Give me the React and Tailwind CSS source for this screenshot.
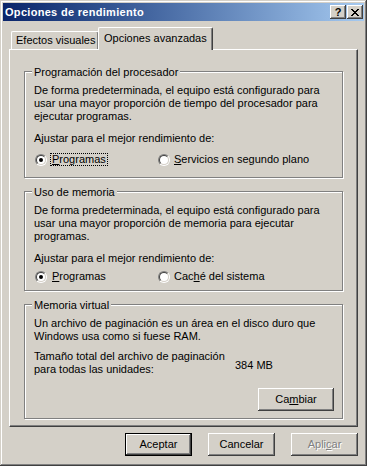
const raised =
  "shadow-[inset_-1px_-1px_#404040,inset_1px_1px_#ffffff,inset_-2px_-2px_#808080,inset_2px_2px_#d4d0c8]";

function Radio({ checked }) {
  return (
    <span className="inline-flex w-[12px] h-[12px] shrink-0 rounded-full border border-t-[#808080] border-l-[#808080] border-r-white border-b-white">
      <span className="flex flex-1 items-center justify-center rounded-full border border-t-[#404040] border-l-[#404040] border-r-[#d4d0c8] border-b-[#d4d0c8] bg-white">
        {checked && <span className="w-[4px] h-[4px] rounded-full bg-black" />}
      </span>
    </span>
  );
}

function Group({ title, className, children }) {
  return (
    <div
      className={
        "relative border border-[#808080] shadow-[inset_1px_1px_#ffffff,1px_1px_#ffffff] pl-[9px] " +
        className
      }
    >
      <span className="absolute left-[7px] top-[-6px] bg-[#d4d0c8] px-[2px]">{title}</span>
      {children}
    </div>
  );
}

function Button({ children, className = "", isDefault, disabled }) {
  return (
    <div
      className={
        "flex items-center justify-center h-[23px] bg-[#d4d0c8] " +
        raised +
        " " +
        (isDefault ? "border border-black " : "") +
        (disabled ? "text-[#808080] [text-shadow:1px_1px_0_#ffffff] " : "") +
        className
      }
    >
      {children}
    </div>
  );
}

function TitleButton({ children }) {
  return (
    <div className={"flex items-center justify-center w-[16px] h-[14px] bg-[#d4d0c8] " + raised}>
      {children}
    </div>
  );
}

export default function App() {
  return (
    <div className="w-[367px] h-[466px] bg-[#d4d0c8] p-[3px] shadow-[inset_-1px_-1px_#404040,inset_1px_1px_#d4d0c8,inset_-2px_-2px_#808080,inset_2px_2px_#ffffff] font-['Liberation_Sans',Arial,sans-serif] text-[11px] leading-[13px] text-black select-none">
      {/* title bar */}
      <div className="flex items-center h-[18px] bg-linear-to-r from-[#0a246a] to-[#a6caf0] pl-[2px] pr-[1px]">
        <span className="flex-1 font-bold text-white tracking-[0.3px]">Opciones de rendimiento</span>
        <div className="flex gap-[1px]">
          <TitleButton>
            <span className="font-bold text-[11px] leading-[11px] mt-[1px]">?</span>
          </TitleButton>
          <TitleButton>
            <svg width="8" height="7" viewBox="0 0 8 7" shapeRendering="crispEdges" className="mt-[1px]">
              <path
                d="M0 0h2v1H0zM6 0h2v1H6zM1 1h2v1H1zM5 1h2v1H5zM2 2h4v1H2zM3 3h2v1H3zM2 4h4v1H2zM1 5h2v1H1zM5 5h2v1H5zM0 6h2v1H0zM6 6h2v1H6z"
                fill="#000"
              />
            </svg>
          </TitleButton>
        </div>
      </div>

      <div className="pl-[6px]">
        {/* tabs */}
        <div className="flex items-end h-[22px] mt-[6px]">
          <div className="w-[88px] h-[18px] ml-[2px] border-l border-t border-white border-r border-r-[#404040] shadow-[inset_-1px_0_#808080] rounded-tl-[2px] rounded-tr-[2px] pl-[4px] pt-[2px]">
            Efectos visuales
          </div>
          <div className="relative z-10 w-[115px] h-[23px] -mb-px -ml-[1px] bg-[#d4d0c8] border-l border-t border-white border-r border-r-[#404040] shadow-[inset_-1px_0_#808080] rounded-tl-[2px] rounded-tr-[2px] pl-[5px] pt-[4px]">
            Opciones avanzadas
          </div>
        </div>

        {/* panel */}
        <div className="w-[349px] h-[378px] border border-t-white border-l-white border-r-[#404040] border-b-[#404040] shadow-[inset_-1px_-1px_#808080] pl-[14px] pt-[21px]">
          <Group title="Programación del procesador" className="w-[319px] pt-[12px] pb-[11px]">
            <p>
              De forma predeterminada, el equipo está configurado para
              <br />
              usar una mayor proporción de tiempo del procesador para
              <br />
              ejecutar programas.
            </p>
            <p className="mt-[9px]">Ajustar para el mejor rendimiento de:</p>
            <div className="flex mt-[8px] ml-[1px]">
              <div className="flex items-center w-[123px] gap-[3px]">
                <Radio checked />
                <span className="border border-dotted border-black px-[1px] leading-[11px] h-[13px]">
                  <span className="underline underline-offset-1">P</span>rogramas
                </span>
              </div>
              <div className="flex items-center gap-[4px]">
                <Radio />
                <span>
                  <span className="underline underline-offset-1">S</span>ervicios en segundo plano
                </span>
              </div>
            </div>
          </Group>

          <Group title="Uso de memoria" className="w-[319px] mt-[13px] pt-[12px] pb-[6px]">
            <p>
              De forma predeterminada, el equipo está configurado para
              <br />
              usar una mayor proporción de memoria para ejecutar
              <br />
              programas.
            </p>
            <p className="mt-[9px]">Ajustar para el mejor rendimiento de:</p>
            <div className="flex mt-[4px] ml-[1px]">
              <div className="flex items-center w-[123px] gap-[3px]">
                <Radio checked />
                <span className="border border-transparent px-[1px]">
                  <span className="underline underline-offset-1">P</span>rogramas
                </span>
              </div>
              <div className="flex items-center gap-[4px]">
                <Radio />
                <span>
                  Cac<span className="underline underline-offset-1">h</span>é del sistema
                </span>
              </div>
            </div>
          </Group>

          <Group title="Memoria virtual" className="w-[319px] mt-[13px] pt-[12px] pb-[7px]">
            <p>
              Un archivo de paginación es un área en el disco duro que
              <br />
              Windows usa como si fuese RAM.
            </p>
            <div className="flex mt-[7px]">
              <p className="w-[201px]">
                Tamaño total del archivo de paginación
                <br />
                para todas las unidades:
              </p>
              <p className="mt-[9px]">384 MB</p>
            </div>
            <div className="flex justify-end pr-[8px] mt-[12px]">
              <Button className="w-[76px]">
                <span>
                  Ca<span className="underline underline-offset-1">m</span>biar
                </span>
              </Button>
            </div>
          </Group>
        </div>
      </div>

      {/* dialog buttons */}
      <div className="flex justify-end gap-[16px] mt-[6px] pr-[6px]">
        <Button isDefault className="w-[67px]">
          Aceptar
        </Button>
        <Button className="w-[67px]">Cancelar</Button>
        <Button disabled className="w-[67px]">
          <span>
            Apli<span className="underline underline-offset-1">c</span>ar
          </span>
        </Button>
      </div>
    </div>
  );
}
